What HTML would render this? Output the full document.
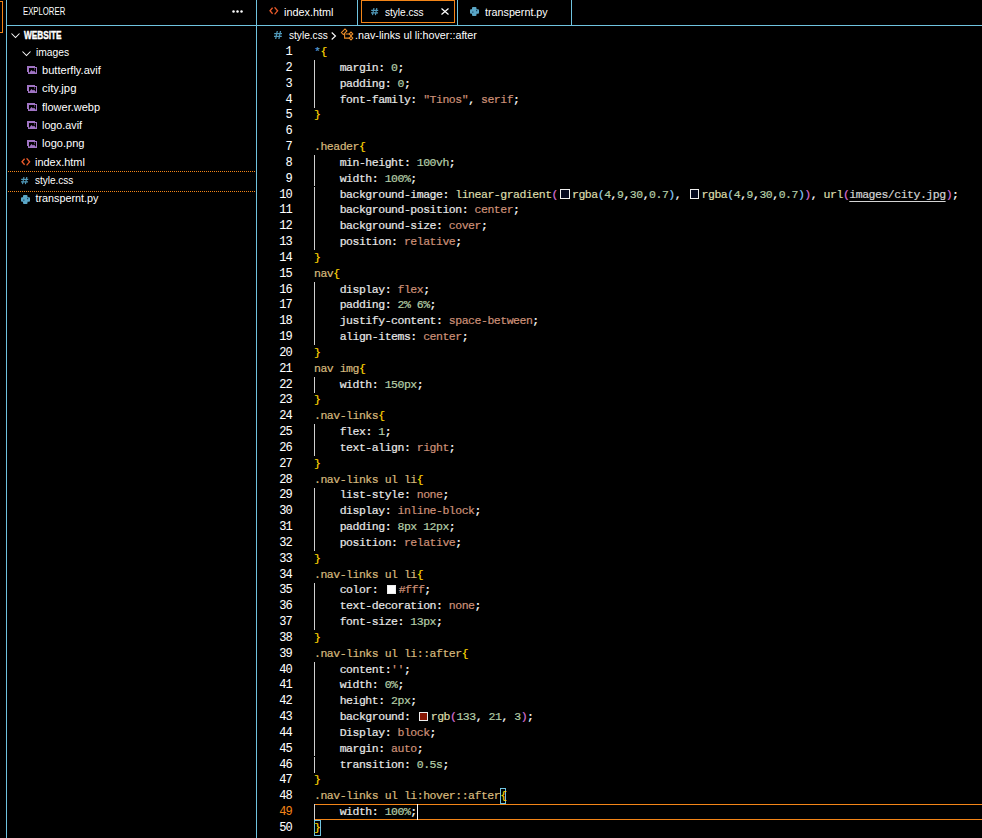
<!DOCTYPE html><html><head><meta charset="utf-8"><style>
*{margin:0;padding:0;box-sizing:border-box}
html,body{width:982px;height:838px;background:#000;overflow:hidden}
body{position:relative;font-family:"Liberation Sans",sans-serif;color:#fff}
.abs{position:absolute}
.cyv{position:absolute;width:1px;background:#6FC3DF}
.cyh{position:absolute;height:1px;background:#6FC3DF}
.cl{position:absolute;left:314px;height:15.8333px;line-height:15.8333px;font-family:"Liberation Mono",monospace;font-size:11.5px;letter-spacing:-0.480px;white-space:pre;color:#fff;-webkit-text-stroke:0.2px currentColor}
.ln{position:absolute;left:249px;width:43px;text-align:right;height:15.8333px;line-height:15.8333px;font-family:"Liberation Mono",monospace;font-size:12.0px;letter-spacing:-0.780px;white-space:pre;-webkit-text-stroke:0.05px currentColor}
.dec{display:inline-block;width:9.33px;height:9.33px;margin:0 2.33px;border:1.17px solid #EEEEEE;vertical-align:-1px}
.url{color:#D4D4D4;text-decoration:underline;text-underline-offset:3px}
.t{position:absolute;white-space:pre;font-size:10.8px;line-height:20px;transform-origin:0 0}
</style></head><body><div class="abs" style="left:-40px;top:1px;width:43px;height:32px;border:1px solid #F38518"></div><div class="cyv" style="left:6px;top:0;height:838px"></div><div class="cyv" style="left:256px;top:0;height:838px"></div><div class="cyh" style="left:6px;top:25px;width:976px"></div><div class="cyv" style="left:357px;top:0;height:25px"></div><div class="cyv" style="left:457px;top:0;height:25px"></div><div class="cyv" style="left:571px;top:0;height:25px"></div><div class="abs" style="left:361px;top:0;width:94px;height:23px;border:1px solid #F38518"></div><div class="abs" style="left:8px;top:171px;width:247px;height:1px;background:repeating-linear-gradient(90deg,#F38518 0 1px,transparent 1px 2px)"></div><div class="abs" style="left:8px;top:191px;width:247px;height:1px;background:repeating-linear-gradient(90deg,#F38518 0 1px,transparent 1px 2px)"></div><div class="abs" style="left:314px;top:804px;width:673px;height:16px;border:1px solid #F38518"></div><div class="abs" style="left:314px;top:60.23px;width:1px;height:47.50px;background:#D0D0D0"></div><div class="abs" style="left:314px;top:155.23px;width:1px;height:95.00px;background:#D0D0D0"></div><div class="abs" style="left:314px;top:281.90px;width:1px;height:63.33px;background:#D0D0D0"></div><div class="abs" style="left:314px;top:376.90px;width:1px;height:15.83px;background:#D0D0D0"></div><div class="abs" style="left:314px;top:424.40px;width:1px;height:31.67px;background:#D0D0D0"></div><div class="abs" style="left:314px;top:487.73px;width:1px;height:63.33px;background:#D0D0D0"></div><div class="abs" style="left:314px;top:582.73px;width:1px;height:47.50px;background:#D0D0D0"></div><div class="abs" style="left:314px;top:661.90px;width:1px;height:110.83px;background:#D0D0D0"></div><div class="abs" style="left:314px;top:804.40px;width:1px;height:15.83px;background:#D0D0D0"></div><div class="abs" style="left:314px;top:186px;width:1px;height:1px;background:#000"></div><div class="abs" style="left:314px;top:756px;width:1px;height:1px;background:#000"></div><div class="abs" style="left:417px;top:804px;width:1px;height:16px;background:#fff"></div><div class="abs" style="left:500px;top:788px;width:6px;height:16px;border:1px solid #6FC3DF"></div><div class="abs" style="left:314px;top:820px;width:7px;height:16px;border:1px solid #6FC3DF"></div><div class="ln" style="top:45.10px;color:#FFFFFF">1</div><div class="ln" style="top:60.93px;color:#FFFFFF">2</div><div class="ln" style="top:76.77px;color:#FFFFFF">3</div><div class="ln" style="top:92.60px;color:#FFFFFF">4</div><div class="ln" style="top:108.43px;color:#FFFFFF">5</div><div class="ln" style="top:124.27px;color:#FFFFFF">6</div><div class="ln" style="top:140.10px;color:#FFFFFF">7</div><div class="ln" style="top:155.93px;color:#FFFFFF">8</div><div class="ln" style="top:171.77px;color:#FFFFFF">9</div><div class="ln" style="top:187.60px;color:#FFFFFF">10</div><div class="ln" style="top:203.43px;color:#FFFFFF">11</div><div class="ln" style="top:219.27px;color:#FFFFFF">12</div><div class="ln" style="top:235.10px;color:#FFFFFF">13</div><div class="ln" style="top:250.93px;color:#FFFFFF">14</div><div class="ln" style="top:266.77px;color:#FFFFFF">15</div><div class="ln" style="top:282.60px;color:#FFFFFF">16</div><div class="ln" style="top:298.43px;color:#FFFFFF">17</div><div class="ln" style="top:314.27px;color:#FFFFFF">18</div><div class="ln" style="top:330.10px;color:#FFFFFF">19</div><div class="ln" style="top:345.93px;color:#FFFFFF">20</div><div class="ln" style="top:361.77px;color:#FFFFFF">21</div><div class="ln" style="top:377.60px;color:#FFFFFF">22</div><div class="ln" style="top:393.43px;color:#FFFFFF">23</div><div class="ln" style="top:409.27px;color:#FFFFFF">24</div><div class="ln" style="top:425.10px;color:#FFFFFF">25</div><div class="ln" style="top:440.93px;color:#FFFFFF">26</div><div class="ln" style="top:456.77px;color:#FFFFFF">27</div><div class="ln" style="top:472.60px;color:#FFFFFF">28</div><div class="ln" style="top:488.43px;color:#FFFFFF">29</div><div class="ln" style="top:504.27px;color:#FFFFFF">30</div><div class="ln" style="top:520.10px;color:#FFFFFF">31</div><div class="ln" style="top:535.93px;color:#FFFFFF">32</div><div class="ln" style="top:551.77px;color:#FFFFFF">33</div><div class="ln" style="top:567.60px;color:#FFFFFF">34</div><div class="ln" style="top:583.43px;color:#FFFFFF">35</div><div class="ln" style="top:599.27px;color:#FFFFFF">36</div><div class="ln" style="top:615.10px;color:#FFFFFF">37</div><div class="ln" style="top:630.93px;color:#FFFFFF">38</div><div class="ln" style="top:646.77px;color:#FFFFFF">39</div><div class="ln" style="top:662.60px;color:#FFFFFF">40</div><div class="ln" style="top:678.43px;color:#FFFFFF">41</div><div class="ln" style="top:694.27px;color:#FFFFFF">42</div><div class="ln" style="top:710.10px;color:#FFFFFF">43</div><div class="ln" style="top:725.93px;color:#FFFFFF">44</div><div class="ln" style="top:741.77px;color:#FFFFFF">45</div><div class="ln" style="top:757.60px;color:#FFFFFF">46</div><div class="ln" style="top:773.43px;color:#FFFFFF">47</div><div class="ln" style="top:789.27px;color:#FFFFFF">48</div><div class="ln" style="top:805.10px;color:#F38518">49</div><div class="ln" style="top:820.93px;color:#FFFFFF">50</div><div class="cl" style="top:44.10px"><span style="color:#569CD6">*</span><span style="color:#FFD700">{</span></div><div class="cl" style="top:59.93px"><span style="color:#FFFFFF">    </span><span style="color:#E8E8E8">margin</span><span style="color:#FFFFFF">:</span><span style="color:#FFFFFF"> </span><span style="color:#B5CEA8">0</span><span style="color:#FFFFFF">;</span></div><div class="cl" style="top:75.77px"><span style="color:#FFFFFF">    </span><span style="color:#E8E8E8">padding</span><span style="color:#FFFFFF">:</span><span style="color:#FFFFFF"> </span><span style="color:#B5CEA8">0</span><span style="color:#FFFFFF">;</span></div><div class="cl" style="top:91.60px"><span style="color:#FFFFFF">    </span><span style="color:#E8E8E8">font-family</span><span style="color:#FFFFFF">:</span><span style="color:#FFFFFF"> </span><span style="color:#CE9178">&quot;Tinos&quot;</span><span style="color:#FFFFFF">, </span><span style="color:#CE9178">serif</span><span style="color:#FFFFFF">;</span></div><div class="cl" style="top:107.43px"><span style="color:#FFD700">}</span></div><div class="cl" style="top:123.27px"></div><div class="cl" style="top:139.10px"><span style="color:#D7BA7D">.header</span><span style="color:#FFD700">{</span></div><div class="cl" style="top:154.93px"><span style="color:#FFFFFF">    </span><span style="color:#E8E8E8">min-height</span><span style="color:#FFFFFF">:</span><span style="color:#FFFFFF"> </span><span style="color:#B5CEA8">100vh</span><span style="color:#FFFFFF">;</span></div><div class="cl" style="top:170.77px"><span style="color:#FFFFFF">    </span><span style="color:#E8E8E8">width</span><span style="color:#FFFFFF">:</span><span style="color:#FFFFFF"> </span><span style="color:#B5CEA8">100%</span><span style="color:#FFFFFF">;</span></div><div class="cl" style="top:186.60px"><span style="color:#FFFFFF">    </span><span style="color:#E8E8E8">background-image</span><span style="color:#FFFFFF">:</span><span style="color:#FFFFFF"> </span><span style="color:#DCDCAA">linear-gradient</span><span style="color:#DA70D6">(</span><i class="dec" style="background:rgba(4,9,30,1)"></i><span style="color:#DCDCAA">rgba</span><span style="color:#87CEFA">(</span><span style="color:#B5CEA8">4</span><span style="color:#FFFFFF">,</span><span style="color:#B5CEA8">9</span><span style="color:#FFFFFF">,</span><span style="color:#B5CEA8">30</span><span style="color:#FFFFFF">,</span><span style="color:#B5CEA8">0.7</span><span style="color:#87CEFA">)</span><span style="color:#FFFFFF">, </span><i class="dec" style="background:rgba(4,9,30,1)"></i><span style="color:#DCDCAA">rgba</span><span style="color:#87CEFA">(</span><span style="color:#B5CEA8">4</span><span style="color:#FFFFFF">,</span><span style="color:#B5CEA8">9</span><span style="color:#FFFFFF">,</span><span style="color:#B5CEA8">30</span><span style="color:#FFFFFF">,</span><span style="color:#B5CEA8">0.7</span><span style="color:#87CEFA">)</span><span style="color:#DA70D6">)</span><span style="color:#FFFFFF">, </span><span style="color:#DCDCAA">url</span><span style="color:#DA70D6">(</span><span class="url">images/city.jpg</span><span style="color:#DA70D6">)</span><span style="color:#FFFFFF">;</span></div><div class="cl" style="top:202.43px"><span style="color:#FFFFFF">    </span><span style="color:#E8E8E8">background-position</span><span style="color:#FFFFFF">:</span><span style="color:#FFFFFF"> </span><span style="color:#CE9178">center</span><span style="color:#FFFFFF">;</span></div><div class="cl" style="top:218.27px"><span style="color:#FFFFFF">    </span><span style="color:#E8E8E8">background-size</span><span style="color:#FFFFFF">:</span><span style="color:#FFFFFF"> </span><span style="color:#CE9178">cover</span><span style="color:#FFFFFF">;</span></div><div class="cl" style="top:234.10px"><span style="color:#FFFFFF">    </span><span style="color:#E8E8E8">position</span><span style="color:#FFFFFF">:</span><span style="color:#FFFFFF"> </span><span style="color:#CE9178">relative</span><span style="color:#FFFFFF">;</span></div><div class="cl" style="top:249.93px"><span style="color:#FFD700">}</span></div><div class="cl" style="top:265.77px"><span style="color:#D7BA7D">nav</span><span style="color:#FFD700">{</span></div><div class="cl" style="top:281.60px"><span style="color:#FFFFFF">    </span><span style="color:#E8E8E8">display</span><span style="color:#FFFFFF">:</span><span style="color:#FFFFFF"> </span><span style="color:#CE9178">flex</span><span style="color:#FFFFFF">;</span></div><div class="cl" style="top:297.43px"><span style="color:#FFFFFF">    </span><span style="color:#E8E8E8">padding</span><span style="color:#FFFFFF">:</span><span style="color:#FFFFFF"> </span><span style="color:#B5CEA8">2% 6%</span><span style="color:#FFFFFF">;</span></div><div class="cl" style="top:313.27px"><span style="color:#FFFFFF">    </span><span style="color:#E8E8E8">justify-content</span><span style="color:#FFFFFF">:</span><span style="color:#FFFFFF"> </span><span style="color:#CE9178">space-between</span><span style="color:#FFFFFF">;</span></div><div class="cl" style="top:329.10px"><span style="color:#FFFFFF">    </span><span style="color:#E8E8E8">align-items</span><span style="color:#FFFFFF">:</span><span style="color:#FFFFFF"> </span><span style="color:#CE9178">center</span><span style="color:#FFFFFF">;</span></div><div class="cl" style="top:344.93px"><span style="color:#FFD700">}</span></div><div class="cl" style="top:360.77px"><span style="color:#D7BA7D">nav img</span><span style="color:#FFD700">{</span></div><div class="cl" style="top:376.60px"><span style="color:#FFFFFF">    </span><span style="color:#E8E8E8">width</span><span style="color:#FFFFFF">:</span><span style="color:#FFFFFF"> </span><span style="color:#B5CEA8">150px</span><span style="color:#FFFFFF">;</span></div><div class="cl" style="top:392.43px"><span style="color:#FFD700">}</span></div><div class="cl" style="top:408.27px"><span style="color:#D7BA7D">.nav-links</span><span style="color:#FFD700">{</span></div><div class="cl" style="top:424.10px"><span style="color:#FFFFFF">    </span><span style="color:#E8E8E8">flex</span><span style="color:#FFFFFF">:</span><span style="color:#FFFFFF"> </span><span style="color:#B5CEA8">1</span><span style="color:#FFFFFF">;</span></div><div class="cl" style="top:439.93px"><span style="color:#FFFFFF">    </span><span style="color:#E8E8E8">text-align</span><span style="color:#FFFFFF">:</span><span style="color:#FFFFFF"> </span><span style="color:#CE9178">right</span><span style="color:#FFFFFF">;</span></div><div class="cl" style="top:455.77px"><span style="color:#FFD700">}</span></div><div class="cl" style="top:471.60px"><span style="color:#D7BA7D">.nav-links ul li</span><span style="color:#FFD700">{</span></div><div class="cl" style="top:487.43px"><span style="color:#FFFFFF">    </span><span style="color:#E8E8E8">list-style</span><span style="color:#FFFFFF">:</span><span style="color:#FFFFFF"> </span><span style="color:#CE9178">none</span><span style="color:#FFFFFF">;</span></div><div class="cl" style="top:503.27px"><span style="color:#FFFFFF">    </span><span style="color:#E8E8E8">display</span><span style="color:#FFFFFF">:</span><span style="color:#FFFFFF"> </span><span style="color:#CE9178">inline-block</span><span style="color:#FFFFFF">;</span></div><div class="cl" style="top:519.10px"><span style="color:#FFFFFF">    </span><span style="color:#E8E8E8">padding</span><span style="color:#FFFFFF">:</span><span style="color:#FFFFFF"> </span><span style="color:#B5CEA8">8px 12px</span><span style="color:#FFFFFF">;</span></div><div class="cl" style="top:534.93px"><span style="color:#FFFFFF">    </span><span style="color:#E8E8E8">position</span><span style="color:#FFFFFF">:</span><span style="color:#FFFFFF"> </span><span style="color:#CE9178">relative</span><span style="color:#FFFFFF">;</span></div><div class="cl" style="top:550.77px"><span style="color:#FFD700">}</span></div><div class="cl" style="top:566.60px"><span style="color:#D7BA7D">.nav-links ul li</span><span style="color:#FFD700">{</span></div><div class="cl" style="top:582.43px"><span style="color:#FFFFFF">    </span><span style="color:#E8E8E8">color</span><span style="color:#FFFFFF">:</span><span style="color:#FFFFFF"> </span><i class="dec" style="background:#ffffff"></i><span style="color:#CE9178">#fff</span><span style="color:#FFFFFF">;</span></div><div class="cl" style="top:598.27px"><span style="color:#FFFFFF">    </span><span style="color:#E8E8E8">text-decoration</span><span style="color:#FFFFFF">:</span><span style="color:#FFFFFF"> </span><span style="color:#CE9178">none</span><span style="color:#FFFFFF">;</span></div><div class="cl" style="top:614.10px"><span style="color:#FFFFFF">    </span><span style="color:#E8E8E8">font-size</span><span style="color:#FFFFFF">:</span><span style="color:#FFFFFF"> </span><span style="color:#B5CEA8">13px</span><span style="color:#FFFFFF">;</span></div><div class="cl" style="top:629.93px"><span style="color:#FFD700">}</span></div><div class="cl" style="top:645.77px"><span style="color:#D7BA7D">.nav-links ul li::after</span><span style="color:#FFD700">{</span></div><div class="cl" style="top:661.60px"><span style="color:#FFFFFF">    </span><span style="color:#E8E8E8">content</span><span style="color:#FFFFFF">:</span><span style="color:#CE9178">&#x27;&#x27;</span><span style="color:#FFFFFF">;</span></div><div class="cl" style="top:677.43px"><span style="color:#FFFFFF">    </span><span style="color:#E8E8E8">width</span><span style="color:#FFFFFF">:</span><span style="color:#FFFFFF"> </span><span style="color:#B5CEA8">0%</span><span style="color:#FFFFFF">;</span></div><div class="cl" style="top:693.27px"><span style="color:#FFFFFF">    </span><span style="color:#E8E8E8">height</span><span style="color:#FFFFFF">:</span><span style="color:#FFFFFF"> </span><span style="color:#B5CEA8">2px</span><span style="color:#FFFFFF">;</span></div><div class="cl" style="top:709.10px"><span style="color:#FFFFFF">    </span><span style="color:#E8E8E8">background</span><span style="color:#FFFFFF">:</span><span style="color:#FFFFFF"> </span><i class="dec" style="background:rgb(133,21,3)"></i><span style="color:#DCDCAA">rgb</span><span style="color:#DA70D6">(</span><span style="color:#B5CEA8">133</span><span style="color:#FFFFFF">, </span><span style="color:#B5CEA8">21</span><span style="color:#FFFFFF">, </span><span style="color:#B5CEA8">3</span><span style="color:#DA70D6">)</span><span style="color:#FFFFFF">;</span></div><div class="cl" style="top:724.93px"><span style="color:#FFFFFF">    </span><span style="color:#E8E8E8">Display</span><span style="color:#FFFFFF">:</span><span style="color:#FFFFFF"> </span><span style="color:#CE9178">block</span><span style="color:#FFFFFF">;</span></div><div class="cl" style="top:740.77px"><span style="color:#FFFFFF">    </span><span style="color:#E8E8E8">margin</span><span style="color:#FFFFFF">:</span><span style="color:#FFFFFF"> </span><span style="color:#CE9178">auto</span><span style="color:#FFFFFF">;</span></div><div class="cl" style="top:756.60px"><span style="color:#FFFFFF">    </span><span style="color:#E8E8E8">transition</span><span style="color:#FFFFFF">:</span><span style="color:#FFFFFF"> </span><span style="color:#B5CEA8">0.5s</span><span style="color:#FFFFFF">;</span></div><div class="cl" style="top:772.43px"><span style="color:#FFD700">}</span></div><div class="cl" style="top:788.27px"><span style="color:#D7BA7D">.nav-links ul li:hover::after</span><span style="color:#FFD700">{</span></div><div class="cl" style="top:804.10px"><span style="color:#FFFFFF">    </span><span style="color:#E8E8E8">width</span><span style="color:#FFFFFF">:</span><span style="color:#FFFFFF"> </span><span style="color:#B5CEA8">100%</span><span style="color:#FFFFFF">;</span></div><div class="cl" style="top:819.93px"><span style="color:#FFD700">}</span></div><div class="t" style="left:23.02px;top:2.0px;font-size:10.0px;font-weight:normal;transform:scaleX(0.7755)">EXPLORER</div><div class="t" style="left:24.0px;top:25.7px;font-size:10.0px;font-weight:bold;transform:scaleX(0.8261);-webkit-text-stroke:0.35px #fff">WEBSITE</div><div class="t" style="left:35.8px;top:41.6px;font-size:10.8px;font-weight:normal;transform:scaleX(0.9543)">images</div><div class="t" style="left:42.0px;top:59.6px;font-size:10.8px;font-weight:normal;transform:scaleX(1.0259)">butterfly.avif</div><div class="t" style="left:42.2px;top:78.2px;font-size:10.8px;font-weight:normal;transform:scaleX(1.05)">city.jpg</div><div class="t" style="left:42.2px;top:96.6px;font-size:10.8px;font-weight:normal;transform:scaleX(1.0175)">flower.webp</div><div class="t" style="left:42.2px;top:114.9px;font-size:10.8px;font-weight:normal;transform:scaleX(0.9951)">logo.avif</div><div class="t" style="left:42.2px;top:133.2px;font-size:10.8px;font-weight:normal;transform:scaleX(1.0268)">logo.png</div><div class="t" style="left:35.4px;top:151.6px;font-size:10.8px;font-weight:normal;transform:scaleX(1.0122)">index.html</div><div class="t" style="left:35.4px;top:169.9px;font-size:10.8px;font-weight:normal;transform:scaleX(0.9244)">style.css</div><div class="t" style="left:35.4px;top:188.2px;font-size:10.8px;font-weight:normal;transform:scaleX(1.0)">transpernt.py</div><div class="t" style="left:283.8px;top:2.0px;font-size:10.8px;font-weight:normal;transform:scaleX(1.0061)">index.html</div><div class="t" style="left:384.8px;top:2.0px;font-size:10.8px;font-weight:normal;transform:scaleX(0.9317)">style.css</div><div class="t" style="left:484.9px;top:2.0px;font-size:10.8px;font-weight:normal;transform:scaleX(0.9952)">transpernt.py</div><div class="t" style="left:288.6px;top:25.0px;font-size:10.8px;font-weight:normal;transform:scaleX(0.9366)">style.css</div><div class="t" style="left:355.0px;top:25.0px;font-size:10.8px;font-weight:normal;transform:scaleX(0.9959)">.nav-links ul li:hover::after</div><svg class="abs" style="left:11px;top:33px" width="10" height="6" viewBox="0 0 10 6"><polyline points="0.5,0.5 4.5,4.5 8.5,0.5" fill="none" stroke="#fff" stroke-width="1.05"/></svg><svg class="abs" style="left:22px;top:51px" width="10" height="6" viewBox="0 0 10 6"><polyline points="0.5,0.5 4.5,4.5 8.5,0.5" fill="none" stroke="#fff" stroke-width="1.05"/></svg><svg class="abs" style="left:26px;top:65px" width="12" height="10" viewBox="0 0 12 10"><rect x="1" y="1" width="8" height="1" fill="#A074C4"/><rect x="1" y="1" width="1" height="6" fill="#A074C4"/><rect x="2" y="2" width="9" height="7" fill="#000"/><rect x="2" y="2" width="9" height="1" fill="#A074C4"/><rect x="2" y="8" width="9" height="1" fill="#A074C4"/><rect x="2" y="2" width="1" height="7" fill="#A074C4"/><rect x="10" y="2" width="1" height="7" fill="#A074C4"/><path d="M3,8 L5.5,5 L7,6.6 L8,5.6 L10,8 Z" fill="#A074C4"/><rect x="8" y="3.5" width="1" height="1" fill="#A074C4"/></svg><svg class="abs" style="left:26px;top:84px" width="12" height="10" viewBox="0 0 12 10"><rect x="1" y="1" width="8" height="1" fill="#A074C4"/><rect x="1" y="1" width="1" height="6" fill="#A074C4"/><rect x="2" y="2" width="9" height="7" fill="#000"/><rect x="2" y="2" width="9" height="1" fill="#A074C4"/><rect x="2" y="8" width="9" height="1" fill="#A074C4"/><rect x="2" y="2" width="1" height="7" fill="#A074C4"/><rect x="10" y="2" width="1" height="7" fill="#A074C4"/><path d="M3,8 L5.5,5 L7,6.6 L8,5.6 L10,8 Z" fill="#A074C4"/><rect x="8" y="3.5" width="1" height="1" fill="#A074C4"/></svg><svg class="abs" style="left:26px;top:102px" width="12" height="10" viewBox="0 0 12 10"><rect x="1" y="1" width="8" height="1" fill="#A074C4"/><rect x="1" y="1" width="1" height="6" fill="#A074C4"/><rect x="2" y="2" width="9" height="7" fill="#000"/><rect x="2" y="2" width="9" height="1" fill="#A074C4"/><rect x="2" y="8" width="9" height="1" fill="#A074C4"/><rect x="2" y="2" width="1" height="7" fill="#A074C4"/><rect x="10" y="2" width="1" height="7" fill="#A074C4"/><path d="M3,8 L5.5,5 L7,6.6 L8,5.6 L10,8 Z" fill="#A074C4"/><rect x="8" y="3.5" width="1" height="1" fill="#A074C4"/></svg><svg class="abs" style="left:26px;top:120px" width="12" height="10" viewBox="0 0 12 10"><rect x="1" y="1" width="8" height="1" fill="#A074C4"/><rect x="1" y="1" width="1" height="6" fill="#A074C4"/><rect x="2" y="2" width="9" height="7" fill="#000"/><rect x="2" y="2" width="9" height="1" fill="#A074C4"/><rect x="2" y="8" width="9" height="1" fill="#A074C4"/><rect x="2" y="2" width="1" height="7" fill="#A074C4"/><rect x="10" y="2" width="1" height="7" fill="#A074C4"/><path d="M3,8 L5.5,5 L7,6.6 L8,5.6 L10,8 Z" fill="#A074C4"/><rect x="8" y="3.5" width="1" height="1" fill="#A074C4"/></svg><svg class="abs" style="left:26px;top:139px" width="12" height="10" viewBox="0 0 12 10"><rect x="1" y="1" width="8" height="1" fill="#A074C4"/><rect x="1" y="1" width="1" height="6" fill="#A074C4"/><rect x="2" y="2" width="9" height="7" fill="#000"/><rect x="2" y="2" width="9" height="1" fill="#A074C4"/><rect x="2" y="8" width="9" height="1" fill="#A074C4"/><rect x="2" y="2" width="1" height="7" fill="#A074C4"/><rect x="10" y="2" width="1" height="7" fill="#A074C4"/><path d="M3,8 L5.5,5 L7,6.6 L8,5.6 L10,8 Z" fill="#A074C4"/><rect x="8" y="3.5" width="1" height="1" fill="#A074C4"/></svg><svg class="abs" style="left:20.5px;top:158px" width="10" height="8" viewBox="0 0 10 8"><polyline points="3.6,0.8 1,3.8 3.6,6.8" fill="none" stroke="#EC5B2A" stroke-width="1.3"/><polyline points="5.6,0.3 8.6,3.8 5.6,7.3" fill="none" stroke="#EC5B2A" stroke-width="1.3"/></svg><svg class="abs" style="left:268.5px;top:7px" width="10" height="8" viewBox="0 0 10 8"><polyline points="3.6,0.8 1,3.8 3.6,6.8" fill="none" stroke="#EC5B2A" stroke-width="1.3"/><polyline points="5.6,0.3 8.6,3.8 5.6,7.3" fill="none" stroke="#EC5B2A" stroke-width="1.3"/></svg><svg class="abs" style="left:20.8px;top:176.8px" width="9" height="9" viewBox="0 0 9 9"><g transform="scale(0.9)"><path d="M3.3,0 L1.7,8 M6.5,0 L4.9,8 M0.2,2.6 L8,2.6 M0,5.4 L7.8,5.4" stroke="#519ABA" stroke-width="1.25" fill="none"/></g></svg><svg class="abs" style="left:370.8px;top:7.8px" width="9" height="9" viewBox="0 0 9 9"><g transform="scale(0.9)"><path d="M3.3,0 L1.7,8 M6.5,0 L4.9,8 M0.2,2.6 L8,2.6 M0,5.4 L7.8,5.4" stroke="#519ABA" stroke-width="1.25" fill="none"/></g></svg><svg class="abs" style="left:274px;top:31px" width="9" height="9" viewBox="0 0 9 9"><g transform="scale(1.0)"><path d="M3.3,0 L1.7,8 M6.5,0 L4.9,8 M0.2,2.6 L8,2.6 M0,5.4 L7.8,5.4" stroke="#519ABA" stroke-width="1.25" fill="none"/></g></svg><svg class="abs" style="left:20.5px;top:195px" width="9" height="9" viewBox="0 0 9 9"><rect x="2" y="0" width="4.5" height="9" rx="1" fill="#5AA6C6"/><rect x="0" y="2.3" width="9" height="4.5" rx="1" fill="#5AA6C6"/><rect x="2.2" y="4.6" width="1.2" height="1" fill="#0a2a50"/><rect x="6" y="3.2" width="1.2" height="1" fill="#0a2a50"/></svg><svg class="abs" style="left:470px;top:6.5px" width="9" height="9" viewBox="0 0 9 9"><rect x="2" y="0" width="4.5" height="9" rx="1" fill="#5AA6C6"/><rect x="0" y="2.3" width="9" height="4.5" rx="1" fill="#5AA6C6"/><rect x="2.2" y="4.6" width="1.2" height="1" fill="#0a2a50"/><rect x="6" y="3.2" width="1.2" height="1" fill="#0a2a50"/></svg><svg class="abs" style="left:441px;top:8px" width="8" height="7" viewBox="0 0 8 7"><path d="M0.5,0.5 L7.5,6.5 M7.5,0.5 L0.5,6.5" stroke="#fff" stroke-width="1.2" fill="none"/></svg><svg class="abs" style="left:231px;top:9px" width="14" height="5" viewBox="0 0 14 5"><circle cx="2.5" cy="2.5" r="1.25" fill="#fff"/><circle cx="6.5" cy="2.5" r="1.25" fill="#fff"/><circle cx="10.5" cy="2.5" r="1.25" fill="#fff"/></svg><svg class="abs" style="left:331px;top:32px" width="6" height="8" viewBox="0 0 6 8"><polyline points="0.7,0.5 4.5,4 0.7,7.5" fill="none" stroke="#fff" stroke-width="1.1"/></svg><svg class="abs" style="left:340px;top:27px" width="15" height="14" viewBox="0 0 15 14"><g fill="none" stroke="#F0902A" stroke-width="1.05"><path d="M1.4,5.6 L5,2 L6.9,3.9 L3.3,7.5 Z"/><path d="M4.6,6.6 L4.6,11.1 L9.3,11.1 M5.6,6.9 L9.3,6.9"/><path d="M9.2,6.9 L11,5.1 L12.8,6.9 L11,8.7 Z"/><path d="M9.2,11.1 L11,9.3 L12.8,11.1 L11,12.9 Z"/></g></svg></body></html>
